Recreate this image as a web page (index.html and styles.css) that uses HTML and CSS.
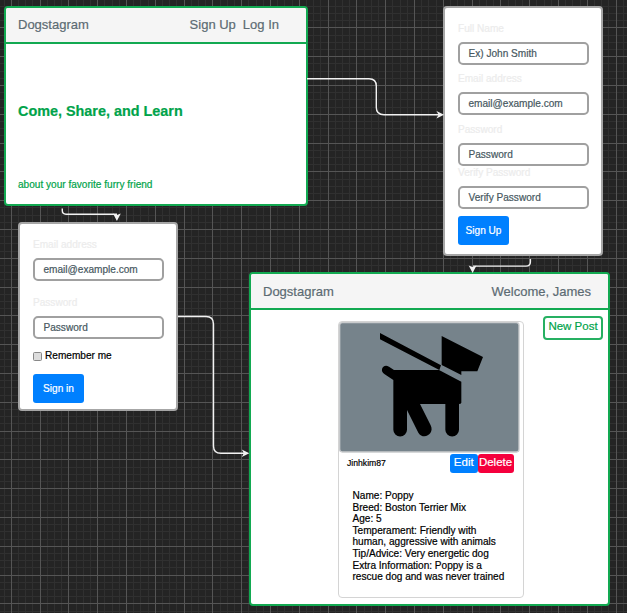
FILE: index.html
```
<!DOCTYPE html>
<html lang="en">
<head>
<meta charset="utf-8">
<title>Dogstagram wireframe</title>
<link rel="stylesheet" href="styles.css">
</head>
<body>
<main class="canvas">
  <svg class="layer" id="grid" width="627" height="613" shape-rendering="crispEdges"></svg>

  <section class="app landing">
    <header class="bar"><span>Dogstagram</span><nav class="links"><span>Sign Up</span><span>Log In</span></nav></header>
    <div class="hero">
      <h1>Come, Share, and Learn</h1>
      <p>about your favorite furry friend</p>
    </div>
  </section>

  <form class="panel signup">
    <label>Full Name</label><div class="field">Ex) John Smith</div>
    <label>Email address</label><div class="field">email@example.com</div>
    <label>Password</label><div class="field">Password</div>
    <label class="tight">Verify Password</label><div class="field">Verify Password</div>
    <div class="submit">Sign Up</div>
  </form>

  <form class="panel login">
    <label>Email address</label><div class="field">email@example.com</div>
    <label>Password</label><div class="field">Password</div>
    <div class="remember"><i class="check"></i><span>Remember me</span></div>
    <div class="submit">Sign in</div>
  </form>

  <section class="app feed">
    <header class="bar"><span>Dogstagram</span><span>Welcome, James</span></header>
    <div class="content">
      <article class="post">
        <svg class="photo" viewBox="27 33 543 393">
          <rect x="29" y="35" width="538" height="388" rx="8" fill="#76838b" stroke="#c9cbcd" stroke-width="4"/>
          <path d="M150 66L333 163L328 177L150 85ZM335 75L459 138L442 181H394V192L335 162Z"/>
          <path d="M177 167L192 177H327L394 212V275Q393 279 387 279V356A20.500 20.500 0 0 1 346 356V279H270L302 343C315 369 280 389 265 365L231 297V356A20.500 20.500 0 0 1 190 356V207L164 190C147 179 159 157 177 167Z"/>
        </svg>
        <div class="meta"><span class="user">Jinhkim87</span><span class="edit">Edit</span><span class="delete">Delete</span></div>
        <p class="details">Name: Poppy<br>Breed: Boston Terrier Mix<br>Age: 5<br>Temperament: Friendly with<br>human, aggressive with animals<br>Tip/Advice: Very energetic dog<br>Extra Information: Poppy is a<br>rescue dog and was never trained</p>
      </article>
      <div class="new">New Post</div>
    </div>
  </section>

  <svg class="layer" width="627" height="613" fill="none" stroke="#f2f2f2" stroke-width="1.400">
    <path d="M307 78.700H369Q376.300 78.700 376.300 86V107.500Q376.300 114.700 384 114.700H439"/>
    <path d="M62.300 208.500V210.500Q62.300 214.200 66 214.200H117"/>
    <path d="M178 316.500H206Q213.500 316.500 213.500 324V446Q213.500 453.300 221 453.300H244"/>
    <path d="M530.400 259V262Q530.400 266.100 526 266.100H473"/>
    <g fill="#f2f2f2" stroke="none">
      <path d="M444 114.700L436.500 111L438.500 114.700L436.500 118.400Z"/>
      <path d="M116.900 221L113 213.500L116.900 215L120.800 213.500Z"/>
      <path d="M249.300 453.300L241.800 449.600L243.800 453.300L241.800 457Z"/>
      <path d="M472.600 273L468.700 265.600L472.600 267L476.500 265.600Z"/>
    </g>
  </svg>
</main>
<script src="grid.js"></script>
</body>
</html>
```
FILE: grid.js
```
const lines = [[], []];
for (let i = -4; i < 92; i++) {
  const level = i % 4 === 0 ? 1 : 0;
  const x = Math.floor(11.201 + i * 7.2);
  const y = Math.floor(27.801 + i * 7.2);
  lines[level].push(`M${x} 0h1v613h-1zM0 ${y}h627v1h-627z`);
}
document.getElementById("grid").innerHTML =
  `<path fill="#303030" d="${lines[0].join("")}"/><path fill="#555" d="${lines[1].join("")}"/>`;
```
FILE: styles.css
```
* { box-sizing: border-box; }
body { margin: 0; font: 10.08px/12px "Liberation Sans", Arial, sans-serif; color: #000; -webkit-text-stroke: 0.2px; }
h1, p { margin: 0; }
.canvas { position: relative; width: 627px; height: 613px; overflow: hidden; background: #242424; }
.layer { position: absolute; left: 0; top: 0; }

.app { position: absolute; background: #fff; border: 2px solid #12a951; border-radius: 4px; overflow: hidden; }
.landing { left: 4px; top: 6px; width: 304px; height: 200px; }
.feed { left: 249px; top: 272px; width: 361px; height: 334px; }
.bar { display: flex; justify-content: space-between; align-items: center; height: 36px; padding: 0 27px 1px 12px; background: #f5f5f5; border-bottom: 2px solid #12a951; font-size: 13px; line-height: 15px; color: #5c6b73; }
.feed .bar { padding: 1px 17px 0 12px; }
.links { display: flex; gap: 7px; }
.hero { padding: 59px 12px 0; color: #00a34a; }
.hero h1 { font-size: 14.4px; line-height: 17px; }
.hero p { margin-top: 59px; }

.panel { position: absolute; background: #fff; border: 2px solid #a6a6a6; border-radius: 4px; display: flex; flex-direction: column; width: 160px; padding: 0 13px; }
.signup { left: 443px; top: 6px; height: 250px; padding-top: 15px; }
.login { left: 18px; top: 222px; height: 189px; padding-top: 15px; }
.panel label { height: 12px; color: #ececec; }
.field { width: 131px; height: 23px; flex: none; margin-top: 7px; padding: 4px 8.5px; border: 2px solid #a0a0a0; border-radius: 5px; color: #475861; }
.signup .field { margin-bottom: 8px; }
.signup .field:nth-of-type(2) { margin-bottom: 9px; }
.signup label.tight { margin-top: -7px; }
.signup .field:nth-of-type(4) { margin-bottom: 0; }
.login .field { margin-bottom: 16px; }
.submit { width: 51px; height: 29px; flex: none; display: flex; align-items: center; justify-content: center; padding-top: 1px; background: #0080ff; border-radius: 3px; color: #fff; }
.signup .submit { margin-top: 7px; }
.remember { display: flex; align-items: center; gap: 3px; margin-top: -5px; }
.check { width: 9px; height: 9px; border: 1px solid #888; border-radius: 1.5px; background: #ddd; }
.login .submit { margin-top: 12px; }

.content { display: flex; justify-content: space-between; align-items: flex-start; padding: 11px 5px 0 87px; }
.post { width: 186px; height: 277px; border: 1px solid #d4d4d4; border-radius: 4px; }
.photo { display: block; width: 181px; height: 131px; }
.meta { display: flex; align-items: center; height: 20px; padding-left: 8px; }
.user { flex: none; width: 103px; font-size: 8.64px; }
.edit, .delete { height: 19px; text-align: center; font-size: 11.5px; line-height: 17px; color: #fff; border-radius: 3px; }
.edit { width: 27.500px; background: #0080ff; }
.delete { width: 36px; background: #f5003d; }
.details { margin: 17px 0 0 13.500px; line-height: 11.6px; white-space: nowrap; }
.new { width: 60px; height: 24px; margin-top: -5px; border: 2px solid #26b062; border-radius: 4px; color: #00a34a; font-size: 11.5px; line-height: 17px; text-align: center; }
```
